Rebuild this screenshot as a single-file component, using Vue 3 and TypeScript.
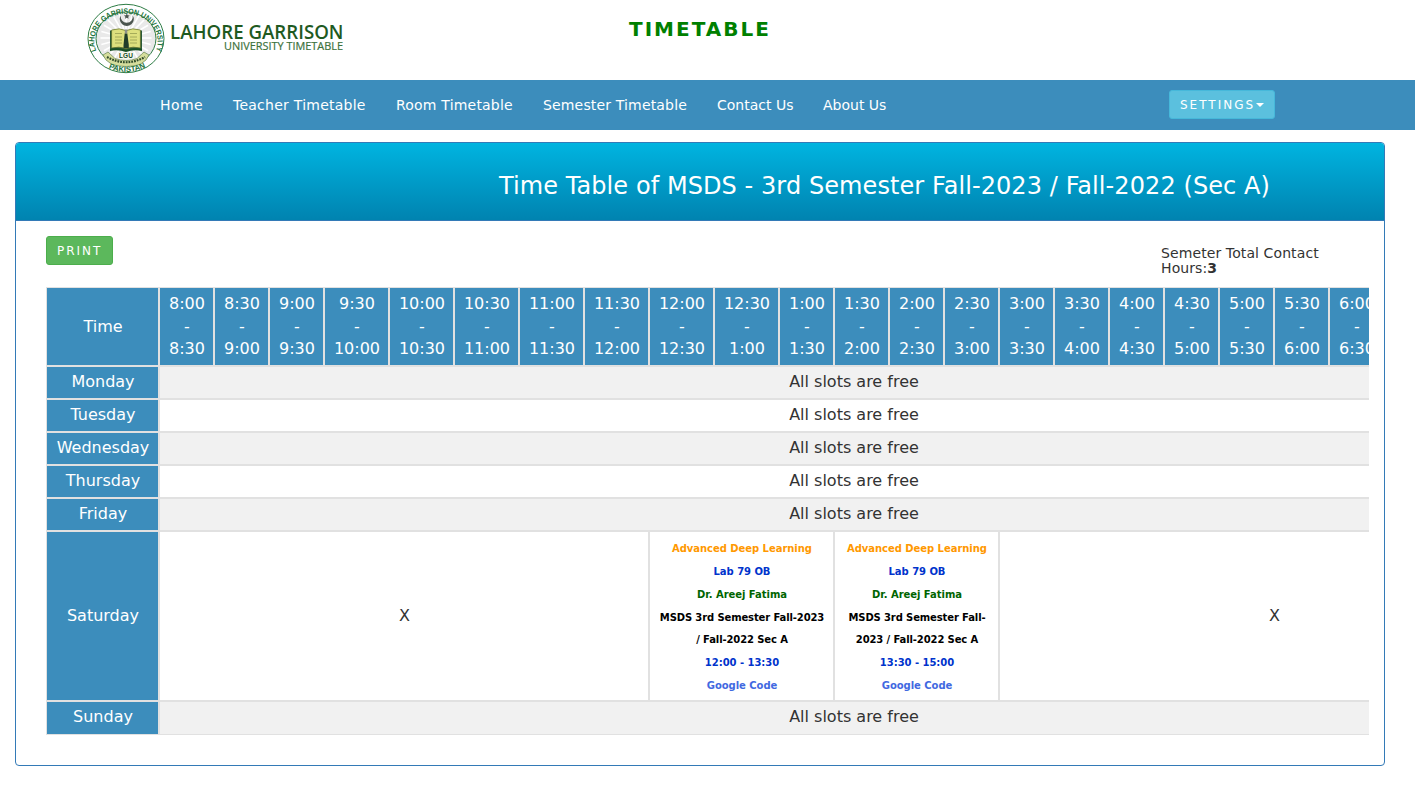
<script setup lang="ts">
interface Cell {
  span: number
  text?: string
  lines?: { text: string; tone: string }[]
}

interface Row {
  day: string
  cells: Cell[]
}

const links: string[] = [
  'Home',
  'Teacher Timetable',
  'Room Timetable',
  'Semester Timetable',
  'Contact Us',
  'About Us',
]

const clock = (halfHours: number): string => {
  const hour = Math.floor(halfHours / 2)
  return `${hour > 12 ? hour - 12 : hour}:${halfHours % 2 ? '30' : '00'}`
}

const slots = Array.from({ length: 24 }, (_, i) => {
  const start = clock(16 + i)
  const end = clock(17 + i)
  return { start, end, wide: start.length > 4 || end.length > 4 }
})

const lecture = (span: number, time: string): Cell => ({
  span,
  lines: [
    { text: 'Advanced Deep Learning', tone: 'subject' },
    { text: 'Lab 79 OB', tone: 'room' },
    { text: 'Dr. Areej Fatima', tone: 'teacher' },
    { text: 'MSDS 3rd Semester Fall-2023 / Fall-2022 Sec A', tone: 'section' },
    { text: time, tone: 'room' },
    { text: 'Google Code', tone: 'code' },
  ],
})

const free = (day: string): Row => ({ day, cells: [{ span: 24, text: 'All slots are free' }] })

const rows: Row[] = [
  free('Monday'),
  free('Tuesday'),
  free('Wednesday'),
  free('Thursday'),
  free('Friday'),
  {
    day: 'Saturday',
    cells: [
      { span: 8, text: 'X' },
      lecture(3, '12:00 - 13:30'),
      lecture(3, '13:30 - 15:00'),
      { span: 10, text: 'X' },
    ],
  },
  free('Sunday'),
]

const rays: number[] = Array.from({ length: 24 }, (_, i) => i * 15)
</script>

<template>
  <div class="page">
    <header class="masthead">
      <svg class="logo" width="262" height="76" viewBox="0 0 262 76">
        <defs>
          <path id="ring-top" d="M11.2 51 A31.6 28 0 1 1 71.200 50.2 L70 54" />
          <path id="ring-bottom" d="M18 65.500 Q41 78.500 64 65.500" />
        </defs>
        <ellipse cx="41" cy="38.5" rx="38" ry="34.2" fill="#fff" stroke="#2f7d46" stroke-width="1" />
        <ellipse cx="41" cy="38.5" rx="30" ry="26.6" fill="#e9e9e9" stroke="#2f7d46" stroke-width="1" />
        <g stroke="#fff" stroke-width="1.6">
          <line
            v-for="a in rays"
            :key="a"
            x1="41"
            y1="30"
            x2="41"
            y2="12.5"
            :transform="`rotate(${a} 41 38)`"
          />
        </g>
        <text class="ring" textLength="112" lengthAdjust="spacingAndGlyphs">
          <textPath href="#ring-top" textLength="112" lengthAdjust="spacingAndGlyphs">LAHORE GARRISON UNIVERSITY</textPath>
        </text>
        <path d="M36 15.2a7 7 0 1 0 11.6 0a6 6 0 1 1-11.6 0z" fill="#4b554f" />
        <path d="m41.8 13.4 .9 1.8 2 .2-1.5 1.3.4 2-1.8-1-1.8 1 .4-2-1.5-1.3 2-.2z" fill="#4b554f" />
        <path d="M25 30.5h32V50H25z" fill="#2c5a38" />
        <path d="M26.6 30q8-2.6 14.4.6v18Q34 46 26.6 48z" fill="#dde07e" stroke="#5d6d29" stroke-width=".7" />
        <path d="M55.4 30q-8-2.6-14.4.6v18Q48 46 55.4 48z" fill="#dde07e" stroke="#5d6d29" stroke-width=".7" />
        <path d="M30 33.5h7M30 37h7M30 40h7M30 43h7M45 33.5h7M45 37h7M45 40h7M45 43h7" stroke="#979e50" stroke-width=".8" />
        <path d="m38.5 45 1.2-11.5h2.6L43.8 45v3h-5.3z" fill="#213d2a" />
        <path d="M39.8 29.5h2.5v4h-2.5z" fill="#8d9189" />
        <path d="M25 49q8-2 16 1 8-3 16-1v2q-8-2-16 1-8-3-16-1z" fill="#184f25" />
        <path d="M33 52h16v6q-8 5-16 0z" fill="#f4f6ee" />
        <path d="m18 55 5-3 7 6.5q11 4 22 0l7-6.5 5 3-3 5-6 4.5q-14 4-28 0l-6-4.5z" fill="#d5dd9c" stroke="#50723d" stroke-width=".6" />
        <path d="M22 57q19 10.5 38 0" fill="none" stroke="#304b2b" stroke-width="2.2" stroke-dasharray="1.8 1" />
        <text x="34" y="57.6" class="initials" textLength="14">LGU</text>
        <text class="ring">
          <textPath href="#ring-bottom" startOffset="6">PAKISTAN</textPath>
        </text>
        <text x="85" y="38.6" class="brand" textLength="173.5" lengthAdjust="spacingAndGlyphs">LAHORE GARRISON</text>
        <text x="139" y="50.4" class="brand-sub" textLength="119" lengthAdjust="spacingAndGlyphs">UNIVERSITY TIMETABLE</text>
      </svg>
      <h1>TIMETABLE</h1>
    </header>

    <nav class="navbar">
      <a v-for="link in links" :key="link">{{ link }}</a>
      <button class="btn settings" type="button">SETTINGS<span class="caret"></span></button>
    </nav>

    <section class="panel">
      <h2>Time Table of MSDS - 3rd Semester Fall-2023 / Fall-2022 (Sec A)</h2>
      <div class="body">
        <div class="tools">
          <button class="btn print" type="button">PRINT</button>
          <p>Semeter Total Contact Hours:<b>3</b></p>
        </div>
        <div class="viewport">
          <table>
            <colgroup>
              <col class="day-col" />
              <col v-for="slot in slots" :key="slot.start" :class="slot.wide ? 'wide-col' : 'slot-col'" />
            </colgroup>
            <thead>
              <tr>
                <th>Time</th>
                <th v-for="slot in slots" :key="slot.start">{{ slot.start }}<br />-<br />{{ slot.end }}</th>
              </tr>
            </thead>
            <tbody>
              <tr v-for="row in rows" :key="row.day" :class="row.day.toLowerCase()">
                <th>{{ row.day }}</th>
                <td v-for="(cell, i) in row.cells" :key="i" :colspan="cell.span">
                  <template v-if="cell.lines">
                    <div v-for="(line, n) in cell.lines" :key="n" class="line">
                      <span :class="line.tone">{{ line.text }}</span>
                    </div>
                  </template>
                  <template v-else>{{ cell.text }}</template>
                </td>
              </tr>
            </tbody>
          </table>
        </div>
      </div>
    </section>
  </div>
</template>

<style>
body {
  margin: 0;
  background: #fff;
}
</style>

<style scoped>
.page,
.page * {
  box-sizing: border-box;
}

.page {
  height: 786px;
  overflow: hidden;
  font: 14px/20px 'DejaVu Sans', Verdana, sans-serif;
  color: #333;
}

.masthead {
  display: flex;
  height: 80px;
  padding-left: 85px;
}

.logo {
  flex: none;
}

.ring {
  font: 700 7.8px 'Liberation Sans', sans-serif;
  fill: #23733b;
}

.initials {
  font: 700 6.5px 'Liberation Sans', sans-serif;
  fill: #164d25;
}

.brand {
  font: 600 20px 'Open Sans', sans-serif;
  fill: #1f5a1f;
}

.brand-sub {
  font: 400 11.2px 'Open Sans', sans-serif;
  fill: #3c713c;
  stroke: #3c713c;
  stroke-width: 0.2px;
}

h1 {
  margin: 18px 0 0 282px;
  font-size: 20px;
  line-height: 22px;
  font-weight: 700;
  letter-spacing: 2px;
  color: green;
}

.navbar {
  display: flex;
  align-items: center;
  height: 50px;
  padding: 0 140px 0 160px;
  background: #3c8dbc;
  color: #fff;
}

.navbar a {
  width: 106px;
  white-space: nowrap;
}

.navbar a:nth-child(1) {
  width: 73px;
  letter-spacing: 0.4px;
}

.navbar a:nth-child(2) {
  width: 163px;
  letter-spacing: 0.25px;
}

.navbar a:nth-child(3) {
  width: 147px;
  letter-spacing: 0.2px;
}

.navbar a:nth-child(4) {
  width: 174px;
  letter-spacing: 0.16px;
}

.btn {
  display: inline-flex;
  align-items: center;
  height: 29px;
  padding: 0 10px;
  border: 1px solid;
  border-radius: 3px;
  font: 12px/18px 'DejaVu Sans', Verdana, sans-serif;
  letter-spacing: 2px;
  color: #fff;
}

.settings {
  width: 106px;
  margin: 0 0 2px auto;
  padding-top: 1px;
  background: #5bc0de;
  border-color: #46b8da;
}

.caret {
  margin-left: 1px;
  border-top: 4px solid #fff;
  border-left: 4px solid transparent;
  border-right: 4px solid transparent;
}

.panel {
  width: 1370px;
  height: 624px;
  margin: 12px 0 0 15px;
  border: 1px solid #337ab7;
  border-radius: 4px;
}

h2 {
  height: 78px;
  margin: 0;
  padding: 30px 114px 0 0;
  border-bottom: 1px solid #337ab7;
  border-radius: 3px 3px 0 0;
  background: linear-gradient(#00b4e0, #0083b0);
  font-size: 24px;
  line-height: 26px;
  font-weight: 400;
  letter-spacing: 0.08px;
  text-align: right;
  color: #fff;
}

.body {
  padding: 15px 15px 0 30px;
}

.tools {
  display: flex;
  justify-content: space-between;
  height: 51px;
}

.print {
  width: 67px;
  background: #5cb85c;
  border-color: #4cae4c;
}

.tools p {
  width: 178px;
  margin: 10px 30px 0 0;
  line-height: 15px;
  letter-spacing: 0.1px;
}

.viewport {
  overflow: hidden;
}

table {
  width: 1503px;
  table-layout: fixed;
  border-collapse: separate;
  border-spacing: 0;
  font-size: 16px;
  line-height: 1.42857143;
  text-align: center;
}

.day-col {
  width: 113px;
}

.slot-col {
  width: 55px;
}

.wide-col {
  width: 65px;
}

th,
td {
  height: 33px;
  padding: 4px 8px;
  border: 1px solid #e1e1e1;
  vertical-align: middle;
}

th {
  padding-left: 9px;
  background: #3c8dbc;
  font-weight: 400;
  color: #fff;
}

thead th {
  height: 79px;
  padding: 4px 7px 3px 8px;
}

td {
  background: #fff;
}

.saturday td {
  padding-left: 9px;
}

tbody tr:nth-child(odd) td {
  background: #f1f1f1;
}

.saturday > * {
  height: 170px;
}

.sunday > * {
  height: 34px;
  vertical-align: top;
}

.line span {
  font-size: 10px;
  font-weight: 700;
  letter-spacing: -0.04px;
}

.subject {
  color: #ff9800;
}

.room {
  color: #0033cc;
}

.teacher {
  color: #006400;
}

.line .section {
  color: #000;
  letter-spacing: -0.12px;
}

.code {
  color: #4169e1;
}
</style>
